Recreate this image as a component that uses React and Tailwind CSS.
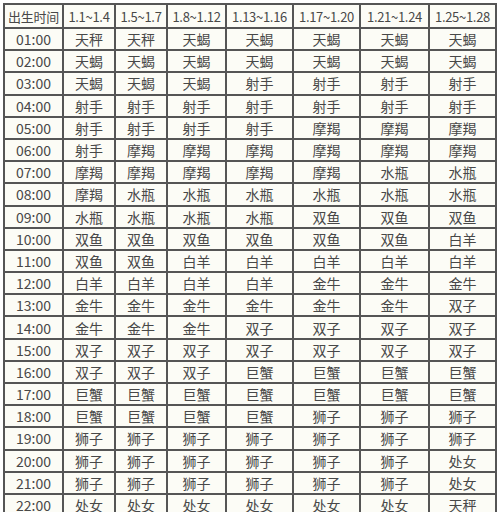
import React from 'react';

const headers = ['出生时间', '1.1~1.4', '1.5~1.7', '1.8~1.12', '1.13~1.16', '1.17~1.20', '1.21~1.24', '1.25~1.28'];
const widths = ['w-[59px]', 'w-[52px]', 'w-[52px]', 'w-[59px]', 'w-[67px]', 'w-[67px]', 'w-[69px]', 'w-[67px]'];

const rows = [
  ['01:00', '天秤', '天秤', '天蝎', '天蝎', '天蝎', '天蝎', '天蝎'],
  ['02:00', '天蝎', '天蝎', '天蝎', '天蝎', '天蝎', '天蝎', '天蝎'],
  ['03:00', '天蝎', '天蝎', '天蝎', '射手', '射手', '射手', '射手'],
  ['04:00', '射手', '射手', '射手', '射手', '射手', '射手', '射手'],
  ['05:00', '射手', '射手', '射手', '射手', '摩羯', '摩羯', '摩羯'],
  ['06:00', '射手', '摩羯', '摩羯', '摩羯', '摩羯', '摩羯', '摩羯'],
  ['07:00', '摩羯', '摩羯', '摩羯', '摩羯', '摩羯', '水瓶', '水瓶'],
  ['08:00', '摩羯', '水瓶', '水瓶', '水瓶', '水瓶', '水瓶', '水瓶'],
  ['09:00', '水瓶', '水瓶', '水瓶', '水瓶', '双鱼', '双鱼', '双鱼'],
  ['10:00', '双鱼', '双鱼', '双鱼', '双鱼', '双鱼', '双鱼', '白羊'],
  ['11:00', '双鱼', '双鱼', '白羊', '白羊', '白羊', '白羊', '白羊'],
  ['12:00', '白羊', '白羊', '白羊', '白羊', '金牛', '金牛', '金牛'],
  ['13:00', '金牛', '金牛', '金牛', '金牛', '金牛', '金牛', '双子'],
  ['14:00', '金牛', '金牛', '金牛', '双子', '双子', '双子', '双子'],
  ['15:00', '双子', '双子', '双子', '双子', '双子', '双子', '双子'],
  ['16:00', '双子', '双子', '双子', '巨蟹', '巨蟹', '巨蟹', '巨蟹'],
  ['17:00', '巨蟹', '巨蟹', '巨蟹', '巨蟹', '巨蟹', '巨蟹', '巨蟹'],
  ['18:00', '巨蟹', '巨蟹', '巨蟹', '巨蟹', '狮子', '狮子', '狮子'],
  ['19:00', '狮子', '狮子', '狮子', '狮子', '狮子', '狮子', '狮子'],
  ['20:00', '狮子', '狮子', '狮子', '狮子', '狮子', '狮子', '处女'],
  ['21:00', '狮子', '狮子', '狮子', '狮子', '狮子', '狮子', '处女'],
  ['22:00', '处女', '处女', '处女', '处女', '处女', '处女', '天秤'],
];

const App = () => {
  return (
    <div className="w-[500px] h-[512px] overflow-hidden bg-white pl-[3px] pt-[3px] font-['Noto_Sans_CJK_SC','Liberation_Sans',sans-serif] text-[14px] text-[#484848]">
      <table className="table-fixed border-collapse bg-[#fcfcf6]">
        <thead>
          <tr className="h-[24px]">
            {headers.map((h, i) => (
              <th key={h} className={`${widths[i]} border-2 border-[#555] p-0 text-center text-[13px] font-normal leading-none tracking-[-0.3px]`}>
                {h}
              </th>
            ))}
          </tr>
        </thead>
        <tbody>
          {rows.map((row) => (
            <tr key={row[0]} className="h-[22.2px]">
              {row.map((cell, i) => (
                <td key={i} className="border-2 border-[#555] p-0 text-center leading-none">
                  {cell}
                </td>
              ))}
            </tr>
          ))}
        </tbody>
      </table>
    </div>
  );
};

export default App;
